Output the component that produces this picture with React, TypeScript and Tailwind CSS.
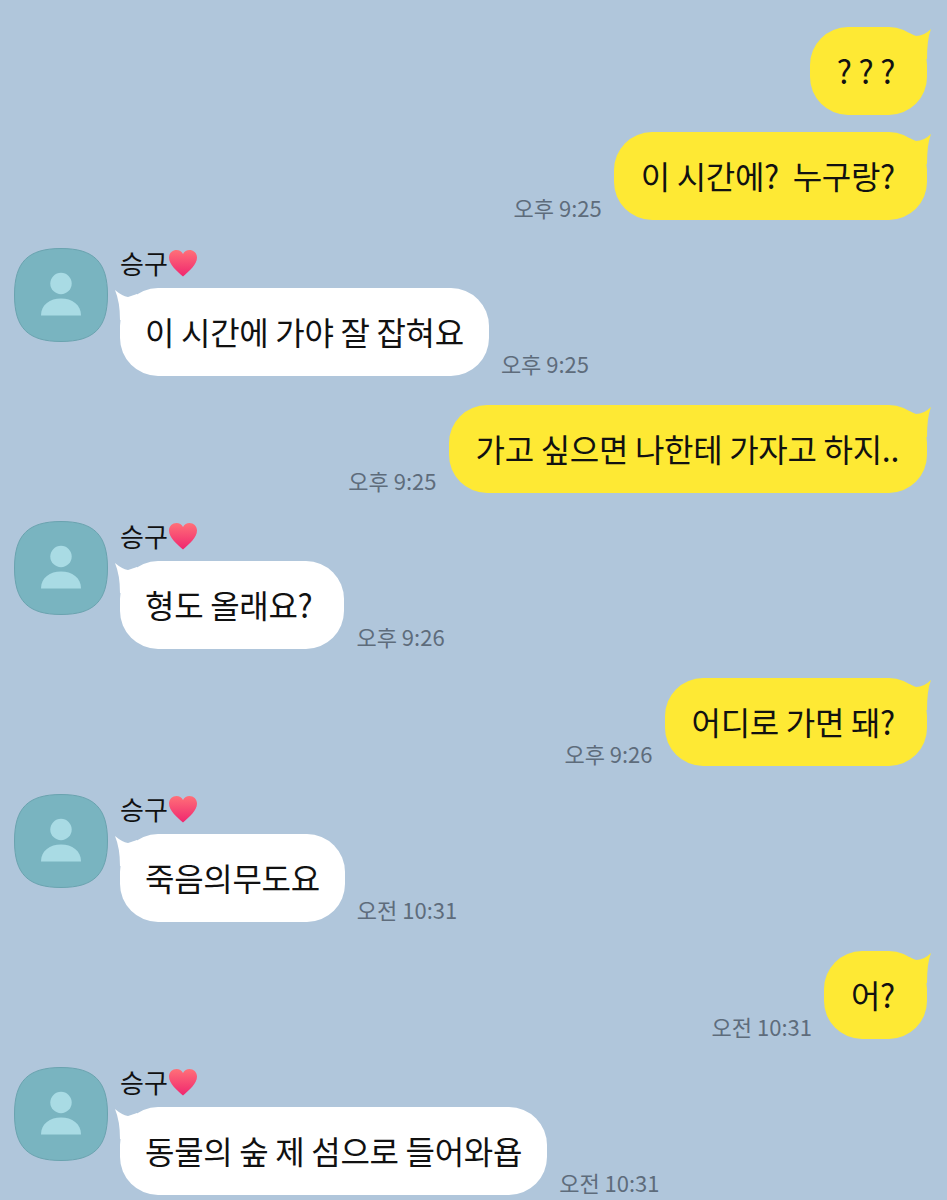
const FONT = "font-['Noto_Sans_CJK_KR','Noto_Sans',sans-serif]";

// KakaoTalk style squircle avatar with the default person glyph
const Avatar = () => (
  <svg width="94" height="94" viewBox="0 0 94 94" className="shrink-0">
    <path
      d="M47 .5C80 .5 93.500 14 93.500 47S80 93.500 47 93.500.5 80 .5 47 14 .5 47 .5Z"
      fill="#79B4C0"
      stroke="#6AA3AF"
      strokeWidth="1"
    />
    <circle cx="47" cy="35.500" r="10.700" fill="#A9DBE4" />
    <path d="M27 67.500c0-11 9-17 20-17s20 6 20 17Z" fill="#A9DBE4" />
  </svg>
);

const Heart = () => (
  <svg width="30" height="28" viewBox="0 0 30 28" className="shrink-0">
    <defs>
      <linearGradient id="heartFill" x1="0" y1="0" x2="0" y2="1">
        <stop offset="0" stopColor="#FF7078" />
        <stop offset="1" stopColor="#F0266F" />
      </linearGradient>
    </defs>
    <path
      d="M15 27.500C9 22 1 16 1 8.500C1 4 4.500 1 8.500 1C11.300 1 13.700 2.500 15 5C16.300 2.500 18.700 1 21.500 1C25.500 1 29 4 29 8.500C29 16 21 22 15 27.500Z"
      fill="url(#heartFill)"
    />
  </svg>
);

const Time = ({ children }: { children: string }) => (
  <span className="text-[22px] leading-[25px] text-[#5E6C7B] whitespace-nowrap">{children}</span>
);

const Sent = ({
  text,
  time,
  className = "",
  pad = "pr-[32px]",
}: {
  text: string;
  time?: string;
  className?: string;
  pad?: string;
}) => (
  <div className={`flex items-end justify-end gap-3 ${className}`}>
    {time && <Time>{time}</Time>}
    <div className={`relative flex h-[88px] items-center rounded-[38px] bg-[#FEE934] pb-[3px] pl-[27px] text-[32px] leading-none tracking-[-0.3px] text-[#111] ${pad}`}>
      <span className="whitespace-pre">{text}</span>
      <svg width="26" height="30" viewBox="0 0 26 30" className="absolute right-[-4px] top-[2px]">
        <path d="M4 4L11 7Q19 7 26 0Q22 10 22 30L4 30Z" fill="#FEE934" />
      </svg>
    </div>
  </div>
);

const Received = ({ text, time, pad = "pr-[25px]" }: { text: string; time: string; pad?: string }) => (
  <div className="flex">
    <Avatar />
    <div className="flex flex-col pl-3">
      <div className="flex h-[40px] items-center pb-[10px] text-[26px] leading-none text-[#111]">
        <span>승구</span>
        <Heart />
      </div>
      <div className="flex items-end gap-3">
        <div className={`relative flex h-[88px] items-center rounded-[38px] bg-white pb-[3px] pl-[25px] text-[32px] leading-none tracking-[-0.3px] text-[#111] ${pad}`}>
          <span className="whitespace-pre">{text}</span>
          <svg width="26" height="30" viewBox="0 0 26 30" className="absolute left-[-5px] top-[2px]">
            <path d="M0 0Q7 6 13 7L22 4L22 30L5 30Q5 12 0 0Z" fill="#FFFFFF" />
          </svg>
        </div>
        <Time>{time}</Time>
      </div>
    </div>
  </div>
);

export default function App() {
  return (
    <div className={`${FONT} flex h-[1200px] w-[947px] flex-col overflow-hidden bg-[#B0C6DB] pl-[14px] pr-[20px] pt-[27px]`}>
      <Sent text="? ? ?" />
      <Sent text="이 시간에?  누구랑?" time="오후 9:25" className="mt-[17px]" />
      <div className="mt-[28px]">
        <Received text="이 시간에 가야 잘 잡혀요" time="오후 9:25" />
      </div>
      <Sent text="가고 싶으면 나한테 가자고 하지.." time="오후 9:25" className="mt-[29px]" pad="pr-[28px]" />
      <div className="mt-[28px]">
        <Received text="형도 올래요?" time="오후 9:26" pad="pr-[32px]" />
      </div>
      <Sent text="어디로 가면 돼?" time="오후 9:26" className="mt-[29px]" />
      <div className="mt-[28px]">
        <Received text="죽음의무도요" time="오전 10:31" />
      </div>
      <Sent text="어?" time="오전 10:31" className="mt-[29px]" />
      <div className="mt-[28px]">
        <Received text="동물의 숲 제 섬으로 들어와욥" time="오전 10:31" />
      </div>
    </div>
  );
}
